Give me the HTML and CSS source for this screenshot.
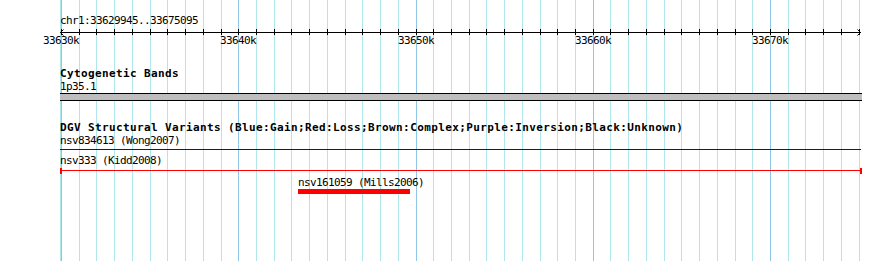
FILE: index.html
```html
<!DOCTYPE html>
<html lang="en">
  <head>
    <meta charset="UTF-8" />
    <meta name="viewport" content="width=device-width, initial-scale=1.0" />
    <title>chr1:33629945..33675095</title>
    <link rel="stylesheet" href="styles.css">
  </head>
  <body>
    <div class="browser">
      <svg class="grid" id="grid" width="890" height="261"></svg>

      <div class="track ruler">
        <div class="label">chr1:33629945..33675095</div>
        <svg class="scale" id="scale" width="802" height="20">
          <rect x="0" y="5" width="801" height="1" fill="#000" />
          <path d="M3.5 2.5 L0.5 5.5 L3.5 8.5" fill="none" stroke="#000" />
          <path d="M797.5 2.5 L800.5 5.5 L797.5 8.5" fill="none" stroke="#000" />
        </svg>
      </div>

      <div class="track cyto">
        <div class="title">Cytogenetic Bands</div>
        <div class="label">1p35.1</div>
        <div class="band"></div>
      </div>

      <div class="track dgv">
        <div class="title">DGV Structural Variants (Blue:Gain;Red:Loss;Brown:Complex;Purple:Inversion;Black:Unknown)</div>
        <div class="label">nsv834613 (Wong2007)</div>
        <div class="span gain"></div>
        <div class="label gap">nsv333 (Kidd2008)</div>
        <div class="span loss"></div>
        <div class="feature" style="margin-left: 238px">
          <div class="label">nsv161059 (Mills2006)</div>
          <div class="bar loss-bar" style="width: 112px"></div>
        </div>
      </div>
    </div>

    <script>
      const NS = 'http://www.w3.org/2000/svg';
      const grid = document.getElementById('grid');
      const scale = document.getElementById('scale');

      const addRect = (svg, x, y, w, h, fill) => {
        const r = document.createElementNS(NS, 'rect');
        r.setAttribute('x', x);
        r.setAttribute('y', y);
        r.setAttribute('width', w);
        r.setAttribute('height', h);
        r.setAttribute('fill', fill);
        svg.appendChild(r);
      };

      addRect(grid, 60, 0, 1, 261, '#aee6ec');

      for (let k = 0; k <= 45; k++) {
        const x = Math.round(61 + 17.725 * k);
        const major = k % 10 === 0;
        addRect(grid, x, 0, 1, 261, major ? '#8ec8e6' : '#aee6ec');
        addRect(scale, x - 60, 2, 1, 6, '#000');
        if (major) {
          const t = document.createElementNS(NS, 'text');
          t.setAttribute('x', x - 60);
          t.setAttribute('y', 17);
          t.setAttribute('class', 'tick-label');
          t.textContent = 33630 + k + 'k';
          scale.appendChild(t);
        }
      }
    </script>
  </body>
</html>
```

FILE: styles.css
```css
body {
  margin: 0;
  background: #fff;
}

.browser {
  position: relative;
  isolation: isolate;
  width: 890px;
  height: 261px;
  overflow: hidden;
  font-family: 'DejaVu Sans Mono', 'Liberation Mono', monospace;
  color: #000;
}

.grid {
  position: absolute;
  top: 0;
  left: 0;
  z-index: -1;
}

.track {
  margin-left: 60px;
  width: 802px;
}

.label {
  font-size: 11px;
  letter-spacing: -0.62px;
  line-height: 13px;
  white-space: nowrap;
}

.title {
  font-size: 11px;
  font-weight: bold;
  letter-spacing: 0.38px;
  line-height: 13px;
  white-space: nowrap;
}

.ruler {
  padding-top: 15px;
}

.ruler .label {
  line-height: 12px;
}

.scale {
  display: block;
  overflow: visible;
}

.tick-label {
  font-family: 'DejaVu Sans Mono', 'Liberation Mono', monospace;
  font-size: 11px;
  letter-spacing: -0.62px;
  text-anchor: middle;
  fill: #000;
}

.cyto {
  margin-top: 20px;
}

.band {
  height: 6px;
  border-top: 1px solid #000;
  border-bottom: 1px solid #000;
  background: #bebebe;
}

.dgv {
  margin-top: 20px;
}

.span {
  position: relative;
  width: 801px;
}

.gain {
  margin-top: 2px;
  height: 1px;
  background: #0000ff;
}

.gap {
  margin-top: 4px;
}

.loss {
  margin-top: 1px;
  height: 6px;
  width: 802px;
  border-left: 2px solid #ff0000;
  border-right: 2px solid #ff0000;
  box-sizing: border-box;
  background: linear-gradient(#ff0000, #ff0000) 0 2px / 100% 1px no-repeat;
}

.feature {
  margin-top: 2px;
}

.bar {
  height: 5px;
}

.loss-bar {
  background: #ff0000;
}
```
